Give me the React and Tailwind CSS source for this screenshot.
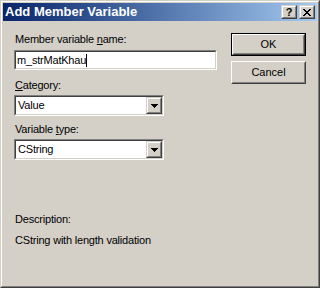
import React from 'react';

const font = { fontFamily: '"Liberation Sans", Arial, sans-serif' };

const Sunken = ({ className = '', children }) => (
  <div className={`border border-t-[#808080] border-l-[#808080] border-b-white border-r-white ${className}`}>
    <div className="h-full border border-t-[#404040] border-l-[#404040] border-b-[#d4d0c8] border-r-[#d4d0c8] bg-white flex items-center">
      {children}
    </div>
  </div>
);

const Raised = ({ className = '', children }) => (
  <div className={`border border-t-[#d4d0c8] border-l-[#d4d0c8] border-b-[#404040] border-r-[#404040] ${className}`}>
    <div className="h-full border border-t-white border-l-white border-b-[#808080] border-r-[#808080] bg-[#d4d0c8] flex items-center justify-center">
      {children}
    </div>
  </div>
);

const Combo = ({ value }) => (
  <Sunken className="w-[150px] h-[21px]">
    <span className="flex-1 pl-[2px] text-[11px] leading-[13px] tracking-[-0.2px] text-black">{value}</span>
    <Raised className="w-[16px] h-[17px]">
      <svg width="7" height="4" viewBox="0 0 7 4" className="mt-[1px]">
        <path d="M0 0h7v1H0zM1 1h5v1H1zM2 2h3v1H2zM3 3h1v1H3z" fill="#000" />
      </svg>
    </Raised>
  </Sunken>
);

const Label = ({ children, className = '' }) => (
  <div className={`h-[13px] leading-[13px] text-[11px] tracking-[-0.2px] text-black ml-[1px] whitespace-nowrap ${className}`}>{children}</div>
);

export default function App() {
  return (
    <div className="w-[320px] h-[288px] bg-[#d4d0c8] border border-t-[#d4d0c8] border-l-[#d4d0c8] border-b-[#404040] border-r-[#404040]" style={font}>
      <div className="h-full border border-t-white border-l-white border-b-[#808080] border-r-[#808080] p-[1px] flex flex-col">
        {/* title bar */}
        <div className="h-[18px] bg-linear-to-r from-[#0a246a] to-[#a6caf0] flex items-center pl-[2px] pr-[2px]">
          <span className="flex-1 text-white font-bold text-[13px] leading-[14px]">Add Member Variable</span>
          <Raised className="w-[16px] h-[14px]">
            <span className="text-black font-bold text-[11px] leading-[10px]">?</span>
          </Raised>
          <Raised className="w-[16px] h-[14px] ml-[2px]">
            <svg width="8" height="7" viewBox="0 0 8 7">
              <path d="M0 0h2v1H0zM6 0h2v1H6zM1 1h2v1H1zM5 1h2v1H5zM2 2h4v1H2zM3 3h2v1H3zM2 4h4v1H2zM1 5h2v1H1zM5 5h2v1H5zM0 6h2v1H0zM6 6h2v1H6z" fill="#000" />
            </svg>
          </Raised>
        </div>

        {/* body */}
        <div className="flex-1 flex pl-[11px]">
          <div className="w-[203px] pt-[12px] flex flex-col">
            <Label>Member variable <u>n</u>ame:</Label>
            <Sunken className="mt-[4px] h-[20px] w-[203px]">
              <span className="pl-[1px] text-[11px] leading-[13px] tracking-[-0.2px] text-black">m_strMatKhau</span>
              <span className="w-[1px] h-[13px] bg-black" />
            </Sunken>
            <Label className="mt-[9px]"><u>C</u>ategory:</Label>
            <div className="mt-[3px]"><Combo value="Value" /></div>
            <Label className="mt-[7px]">Variable <u>t</u>ype:</Label>
            <div className="mt-[3px]"><Combo value="CString" /></div>
            <Label className="mt-[53px]">Description:</Label>
            <Label className="mt-[8px]">CString with length validation</Label>
          </div>

          <div className="ml-[14px] pt-[12px] flex flex-col">
            <div className="w-[75px] h-[23px] border border-black">
              <div className="h-full border border-t-white border-l-white border-b-[#404040] border-r-[#404040]">
                <div className="h-full border border-t-[#d4d0c8] border-l-[#d4d0c8] border-b-[#808080] border-r-[#808080] flex items-center justify-center text-[11px] text-black">
                  OK
                </div>
              </div>
            </div>
            <div className="mt-[5px] w-[75px] h-[23px] border border-t-white border-l-white border-b-[#404040] border-r-[#404040]">
              <div className="h-full border border-t-[#d4d0c8] border-l-[#d4d0c8] border-b-[#808080] border-r-[#808080] flex items-center justify-center text-[11px] text-black">
                Cancel
              </div>
            </div>
          </div>
        </div>
      </div>
    </div>
  );
}
